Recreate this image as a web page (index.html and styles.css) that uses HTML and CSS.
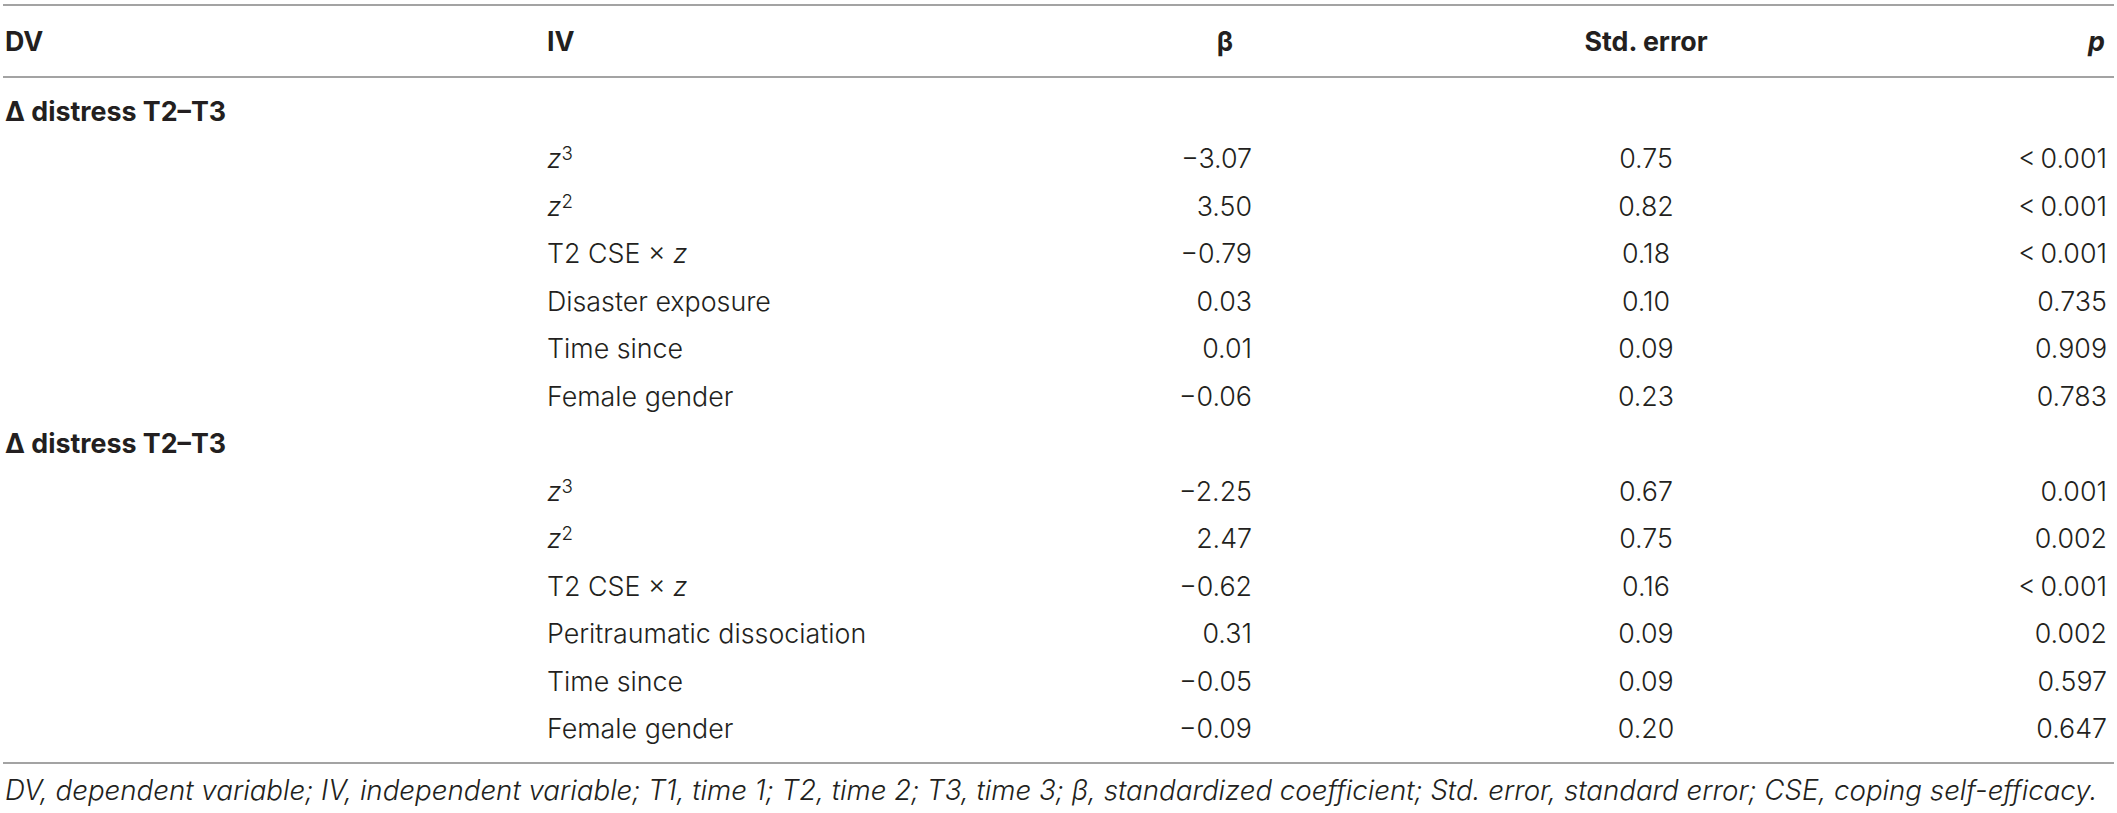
FILE: index.html
```html
<!DOCTYPE html>
<html lang="en">
<head>
<meta charset="utf-8">
<title>Table</title>
<link rel="stylesheet" href="styles.css">
</head>
<body>
<div class="wrap">
<table class="tbl">
<colgroup><col class="c-dv"><col class="c-iv"><col class="c-b"><col class="c-se"><col class="c-p"></colgroup>
<thead>
<tr><th class="dv">DV</th><th class="iv">IV</th><th class="b">β</th><th class="se">Std. error</th><th class="p"><i>p</i></th></tr>
</thead>
<tbody>
<tr class="grp first"><td class="dv">Δ distress T2–T3</td><td></td><td></td><td></td><td></td></tr>
<tr><td></td><td class="iv"><i>z</i><sup>3</sup></td><td class="b">−3.07</td><td class="se">0.75</td><td class="p">&lt;&thinsp;0.001</td></tr>
<tr><td></td><td class="iv"><i>z</i><sup>2</sup></td><td class="b">3.50</td><td class="se">0.82</td><td class="p">&lt;&thinsp;0.001</td></tr>
<tr><td></td><td class="iv">T2 CSE × <i>z</i></td><td class="b">−0.79</td><td class="se">0.18</td><td class="p">&lt;&thinsp;0.001</td></tr>
<tr><td></td><td class="iv">Disaster exposure</td><td class="b">0.03</td><td class="se">0.10</td><td class="p">0.735</td></tr>
<tr><td></td><td class="iv">Time since</td><td class="b">0.01</td><td class="se">0.09</td><td class="p">0.909</td></tr>
<tr><td></td><td class="iv">Female gender</td><td class="b">−0.06</td><td class="se">0.23</td><td class="p">0.783</td></tr>
<tr class="grp"><td class="dv">Δ distress T2–T3</td><td></td><td></td><td></td><td></td></tr>
<tr><td></td><td class="iv"><i>z</i><sup>3</sup></td><td class="b">−2.25</td><td class="se">0.67</td><td class="p">0.001</td></tr>
<tr><td></td><td class="iv"><i>z</i><sup>2</sup></td><td class="b">2.47</td><td class="se">0.75</td><td class="p">0.002</td></tr>
<tr><td></td><td class="iv">T2 CSE × <i>z</i></td><td class="b">−0.62</td><td class="se">0.16</td><td class="p">&lt;&thinsp;0.001</td></tr>
<tr><td></td><td class="iv">Peritraumatic dissociation</td><td class="b">0.31</td><td class="se">0.09</td><td class="p">0.002</td></tr>
<tr><td></td><td class="iv">Time since</td><td class="b">−0.05</td><td class="se">0.09</td><td class="p">0.597</td></tr>
<tr class="last"><td></td><td class="iv">Female gender</td><td class="b">−0.09</td><td class="se">0.20</td><td class="p">0.647</td></tr>
</tbody>
</table>
<p class="note">DV, dependent variable; IV, independent variable; T1, time 1; T2, time 2; T3, time 3; β, standardized coefficient; Std. error, standard error; CSE, coping self-efficacy.</p>
</div>
</body>
</html>
```

FILE: styles.css
```css
html, body {
  margin: 0;
  padding: 0;
  background: #ffffff;
}
body {
  font-family: "Inter", "Liberation Sans", Arial, sans-serif;
  color: #231f20;
}
.wrap {
  padding: 4px 3px 0 3px;
}
.tbl {
  width: 2111px;
  table-layout: fixed;
  border-collapse: collapse;
  border-spacing: 0;
  font-size: 26.8px;
  font-weight: 300;
}
.c-dv { width: 544px; }
.c-iv { width: 553px; }
.c-b { width: 250px; }
.c-se { width: 592px; }
.c-p { width: 172px; }

.tbl th {
  padding: 0;
  line-height: 70px;
  font-weight: 700;
  border-top: 2px solid #a3a3a3;
  border-bottom: 2px solid #a3a3a3;
  vertical-align: middle;
  white-space: nowrap;
}
.tbl td {
  padding: 0;
  line-height: 47.5px;
  vertical-align: middle;
  white-space: nowrap;
}
.tbl .dv { text-align: left; padding-left: 2px; }
.tbl .iv { text-align: left; }
th.b { text-align: center; }
td.b { text-align: right; padding-right: 98px; }
.tbl .se { text-align: center; }
th.p { text-align: right; padding-right: 9px; }
td.p { text-align: right; padding-right: 7px; }

.grp td.dv { font-weight: 700; }
.tbl tr.first td { padding-top: 9.5px; }
.tbl tr.last td { padding-bottom: 9.5px; border-bottom: 2px solid #a3a3a3; }

.tbl sup {
  font-size: 0.7em;
  line-height: 0;
  vertical-align: 0.45em;
}
.tbl i { font-style: italic; }

.note {
  margin: 0;
  padding: 9px 0 0 2px;
  font-size: 27.7px;
  line-height: 34px;
  font-style: italic;
  font-weight: 300;
  white-space: nowrap;
}
```
